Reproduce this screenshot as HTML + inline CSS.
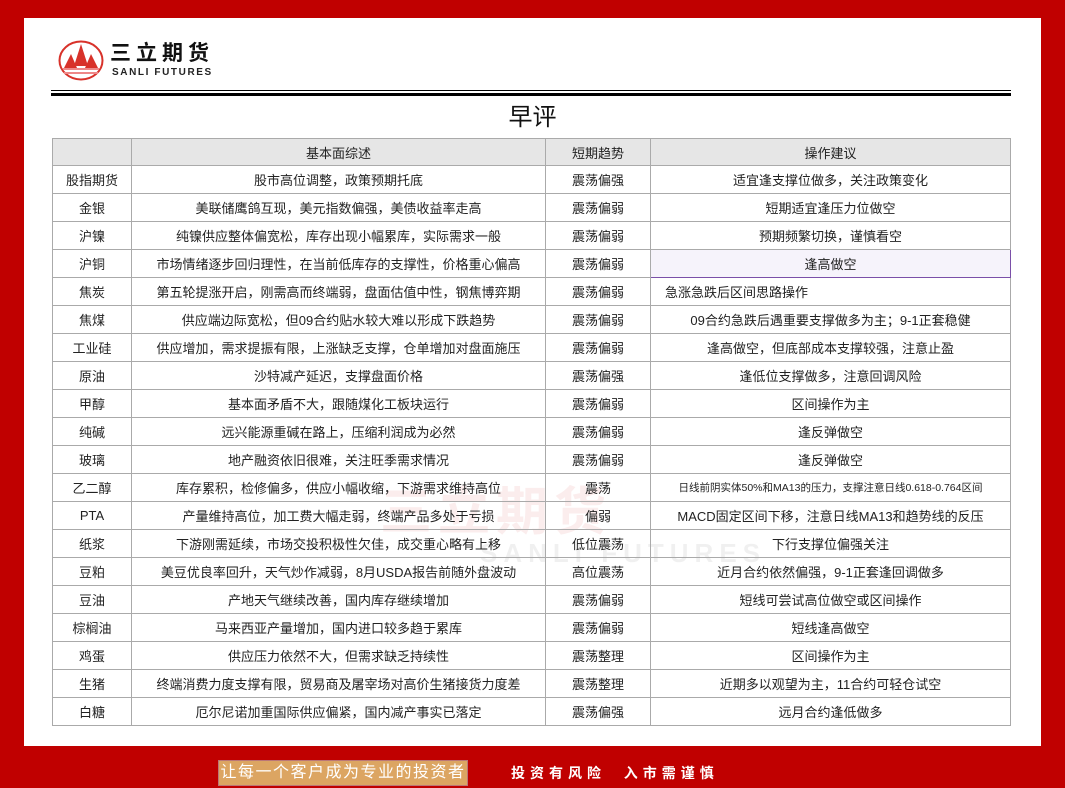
<!DOCTYPE html>
<html><head><meta charset="utf-8"><style>
*{margin:0;padding:0;box-sizing:border-box}
body{width:1065px;height:788px;background:#c00000;position:relative;overflow:hidden;font-family:"Liberation Sans","Noto Sans CJK SC",sans-serif;color:#222}
.panel{position:absolute;left:24px;top:18px;width:1017px;height:728px;background:#fff}
.logo{position:absolute;left:58px;top:40px}
.l1{position:absolute;left:51px;top:90px;width:960px;height:1px;background:#000}
.l2{position:absolute;left:51px;top:93px;width:960px;height:3px;background:#000}
.title{position:absolute;left:0;width:1065px;top:97px;text-align:center;font-size:24px;color:#111}
table{position:absolute;left:52px;top:138px;border-collapse:collapse;font-size:13px;table-layout:fixed}
td{border:1px solid #aaa;height:28px;text-align:center;white-space:nowrap;overflow:hidden;padding:0}
tr.h td{background:#e6e6e6;height:27px}
.wm{position:absolute;left:380px;top:470px;font-size:52px;font-weight:bold;color:rgba(200,0,0,0.07);letter-spacing:6px}
.wm2{position:absolute;left:480px;top:538px;font-size:26px;font-weight:bold;color:rgba(0,0,0,0.06);letter-spacing:6px}
.foot1{position:absolute;left:218px;top:760px;width:250px;height:26px;background:#dca562;border:1px solid #b77;color:#fff;font-size:16px;line-height:24px;text-align:center;letter-spacing:1.5px}
.foot2{position:absolute;left:511px;top:760px;color:#fff;font-size:14px;line-height:26px;letter-spacing:5px;font-weight:bold}
</style></head><body>
<div class="panel"></div>
<div class="logo">
<svg width="48" height="42" viewBox="0 0 48 42" style="position:absolute;left:0;top:0">
<ellipse cx="23" cy="20.5" rx="21.5" ry="19" fill="#fff" stroke="#d8322a" stroke-width="2"/>
<polygon points="23,4 30,26 16,26" fill="#d8322a"/>
<polygon points="13,14 19,28 6,28" fill="#d8322a"/>
<polygon points="33,14 40,28 27,28" fill="#d8322a"/>
<rect x="5" y="28" width="36" height="2" fill="#e88"/>
<rect x="6" y="32" width="34" height="2" fill="#e88"/>
</svg>
<div style="position:absolute;left:52px;top:2px;font-size:21px;line-height:24px;font-weight:bold;letter-spacing:5px;color:#111;white-space:nowrap">三立期货</div>
<div style="position:absolute;left:54px;top:27px;font-size:10px;line-height:12px;font-weight:bold;letter-spacing:1.6px;color:#222;white-space:nowrap">SANLI FUTURES</div>
</div>
<div class="l1"></div><div class="l2"></div>
<div class="title">早评</div>
<div class="wm">三立期货</div>
<div class="wm2">SANLI FUTURES</div>
<table>
<colgroup><col style="width:79px"><col style="width:414px"><col style="width:105px"><col style="width:360px"></colgroup>
<tr class="h"><td></td><td>基本面综述</td><td>短期趋势</td><td>操作建议</td></tr>
<tr><td>股指期货</td><td>股市高位调整，政策预期托底</td><td>震荡偏强</td><td>适宜逢支撑位做多，关注政策变化</td></tr>
<tr><td>金银</td><td>美联储鹰鸽互现，美元指数偏强，美债收益率走高</td><td>震荡偏弱</td><td>短期适宜逢压力位做空</td></tr>
<tr><td>沪镍</td><td>纯镍供应整体偏宽松，库存出现小幅累库，实际需求一般</td><td>震荡偏弱</td><td>预期频繁切换，谨慎看空</td></tr>
<tr><td>沪铜</td><td>市场情绪逐步回归理性，在当前低库存的支撑性，价格重心偏高</td><td>震荡偏弱</td><td style="border:1px solid #7a4fa8;background:#f6f3fb">逢高做空</td></tr>
<tr><td>焦炭</td><td>第五轮提涨开启，刚需高而终端弱，盘面估值中性，钢焦博弈期</td><td>震荡偏弱</td><td style="text-align:left;padding-left:14px">急涨急跌后区间思路操作</td></tr>
<tr><td>焦煤</td><td>供应端边际宽松，但09合约贴水较大难以形成下跌趋势</td><td>震荡偏弱</td><td>09合约急跌后遇重要支撑做多为主；9-1正套稳健</td></tr>
<tr><td>工业硅</td><td>供应增加，需求提振有限，上涨缺乏支撑，仓单增加对盘面施压</td><td>震荡偏弱</td><td>逢高做空，但底部成本支撑较强，注意止盈</td></tr>
<tr><td>原油</td><td>沙特减产延迟，支撑盘面价格</td><td>震荡偏强</td><td>逢低位支撑做多，注意回调风险</td></tr>
<tr><td>甲醇</td><td>基本面矛盾不大，跟随煤化工板块运行</td><td>震荡偏弱</td><td>区间操作为主</td></tr>
<tr><td>纯碱</td><td>远兴能源重碱在路上，压缩利润成为必然</td><td>震荡偏弱</td><td>逢反弹做空</td></tr>
<tr><td>玻璃</td><td>地产融资依旧很难，关注旺季需求情况</td><td>震荡偏弱</td><td>逢反弹做空</td></tr>
<tr><td>乙二醇</td><td>库存累积，检修偏多，供应小幅收缩，下游需求维持高位</td><td>震荡</td><td style="font-size:10.5px">日线前阴实体50%和MA13的压力，支撑注意日线0.618-0.764区间</td></tr>
<tr><td>PTA</td><td>产量维持高位，加工费大幅走弱，终端产品多处于亏损</td><td>偏弱</td><td>MACD固定区间下移，注意日线MA13和趋势线的反压</td></tr>
<tr><td>纸浆</td><td>下游刚需延续，市场交投积极性欠佳，成交重心略有上移</td><td>低位震荡</td><td>下行支撑位偏强关注</td></tr>
<tr><td>豆粕</td><td>美豆优良率回升，天气炒作减弱，8月USDA报告前随外盘波动</td><td>高位震荡</td><td>近月合约依然偏强，9-1正套逢回调做多</td></tr>
<tr><td>豆油</td><td>产地天气继续改善，国内库存继续增加</td><td>震荡偏弱</td><td>短线可尝试高位做空或区间操作</td></tr>
<tr><td>棕榈油</td><td>马来西亚产量增加，国内进口较多趋于累库</td><td>震荡偏弱</td><td>短线逢高做空</td></tr>
<tr><td>鸡蛋</td><td>供应压力依然不大，但需求缺乏持续性</td><td>震荡整理</td><td>区间操作为主</td></tr>
<tr><td>生猪</td><td>终端消费力度支撑有限，贸易商及屠宰场对高价生猪接货力度差</td><td>震荡整理</td><td>近期多以观望为主，11合约可轻仓试空</td></tr>
<tr><td>白糖</td><td>厄尔尼诺加重国际供应偏紧，国内减产事实已落定</td><td>震荡偏强</td><td>远月合约逢低做多</td></tr>
</table>
<div class="foot1">让每一个客户成为专业的投资者</div>
<div class="foot2">投资有风险&nbsp;&nbsp;入市需谨慎</div>
</body></html>
